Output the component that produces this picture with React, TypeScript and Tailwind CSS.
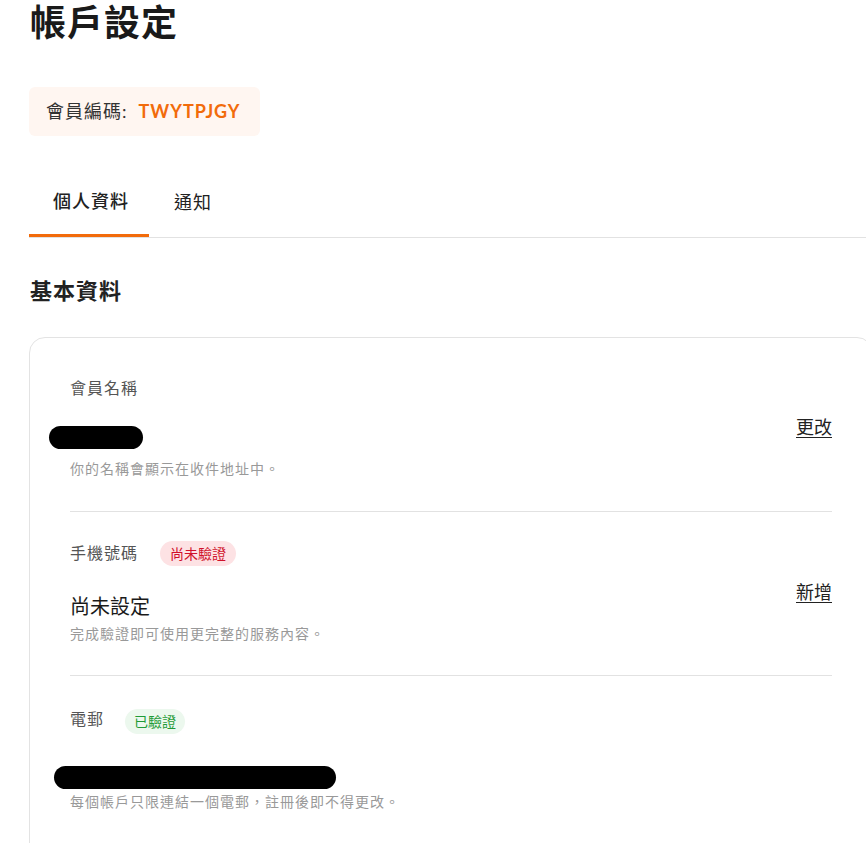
export default function App() {
  return (
    <div className="w-[866px] h-[843px] overflow-hidden bg-white font-['Lato','Noto_Sans_CJK_TC',sans-serif] tracking-[1px] text-[#222]">
      <div className="pl-[29px]">
        {/* Header */}
        <h1 className="text-[36px] leading-[44px] font-bold text-[#1a1a1a] pl-[1px]">
          帳戶設定
        </h1>

        {/* Member code */}
        <div className="mt-[43px] inline-flex items-center h-[49px] pl-[17px] pr-[19px] rounded-[6px] bg-[#fff6f1] text-[18px]">
          <span className="text-[#333]">會員編碼:</span>
          <span className="ml-[11px] font-bold text-[#f26b0b]">TWYTPJGY</span>
        </div>

        {/* Tabs */}
        <div className="mt-[32px] flex border-b border-[#e2e2e2]">
          <div className="h-[69px] pl-[24px] pr-[20px] flex items-center text-[18px] font-medium text-[#222] border-b-[3px] border-[#f26b0b] -mb-px">
            個人資料
          </div>
          <div className="h-[69px] px-[25px] flex items-center text-[18px] text-[#222]">
            通知
          </div>
        </div>

        {/* Basic info */}
        <h2 className="mt-[38px] text-[22px] leading-[30px] font-bold text-[#222] pl-[1px]">
          基本資料
        </h2>

        <div className="mt-[31px] w-[844px] rounded-[16px] border border-[#e3e3e3] px-[40px] pt-[37px] pb-[40px]">
          {/* Name */}
          <div className="flex items-center justify-between pb-[32px] border-b border-[#e2e2e2]">
            <div className="flex flex-col">
              <div className="h-[26px] flex items-center text-[16px] text-[#555]">會員名稱</div>
              <div className="mt-[26px] h-[28px] flex items-center">
                <div className="w-[94px] h-[23px] -ml-[21px] -translate-y-[4px] rounded-full bg-black" />
              </div>
              <div className="mt-[4px] leading-[20px] text-[14px] text-[#999]">你的名稱會顯示在收件地址中。</div>
            </div>
            <a className="text-[18px] tracking-normal text-[#222] underline underline-offset-[3px] cursor-pointer">更改</a>
          </div>

          {/* Phone */}
          <div className="flex items-center justify-between pt-[28px] pb-[31px] border-b border-[#e2e2e2]">
            <div className="flex flex-col">
              <div className="h-[26px] flex items-center gap-[22px] text-[16px] text-[#555]">
                <span>手機號碼</span>
                <span className="h-[25px] px-[10px] flex items-center rounded-full bg-[#fde2e4] text-[14px] tracking-normal text-[#d0112b]">
                  尚未驗證
                </span>
              </div>
              <div className="mt-[26px] h-[28px] flex items-center text-[20px] tracking-normal text-[#1a1a1a]">尚未設定</div>
              <div className="mt-[4px] leading-[20px] text-[14px] text-[#999]">完成驗證即可使用更完整的服務內容。</div>
            </div>
            <a className="text-[18px] tracking-normal text-[#222] underline underline-offset-[3px] cursor-pointer">新增</a>
          </div>

          {/* Email */}
          <div className="flex items-center justify-between pt-[32px] pb-[31px]">
            <div className="flex flex-col">
              <div className="h-[26px] flex items-center gap-[21px] text-[16px] text-[#555]">
                <span className="-translate-y-[2px]">電郵</span>
                <span className="h-[25px] px-[9px] flex items-center rounded-full bg-[#ecf8ee] text-[14px] tracking-normal text-[#1f9b37]">
                  已驗證
                </span>
              </div>
              <div className="mt-[26px] h-[28px] flex items-center">
                <div className="w-[282px] h-[23px] -ml-[16px] translate-y-[3px] rounded-full bg-black" />
              </div>
              <div className="mt-[4px] leading-[20px] text-[14px] text-[#999]">每個帳戶只限連結一個電郵，註冊後即不得更改。</div>
            </div>
          </div>
        </div>
      </div>
    </div>
  );
}
